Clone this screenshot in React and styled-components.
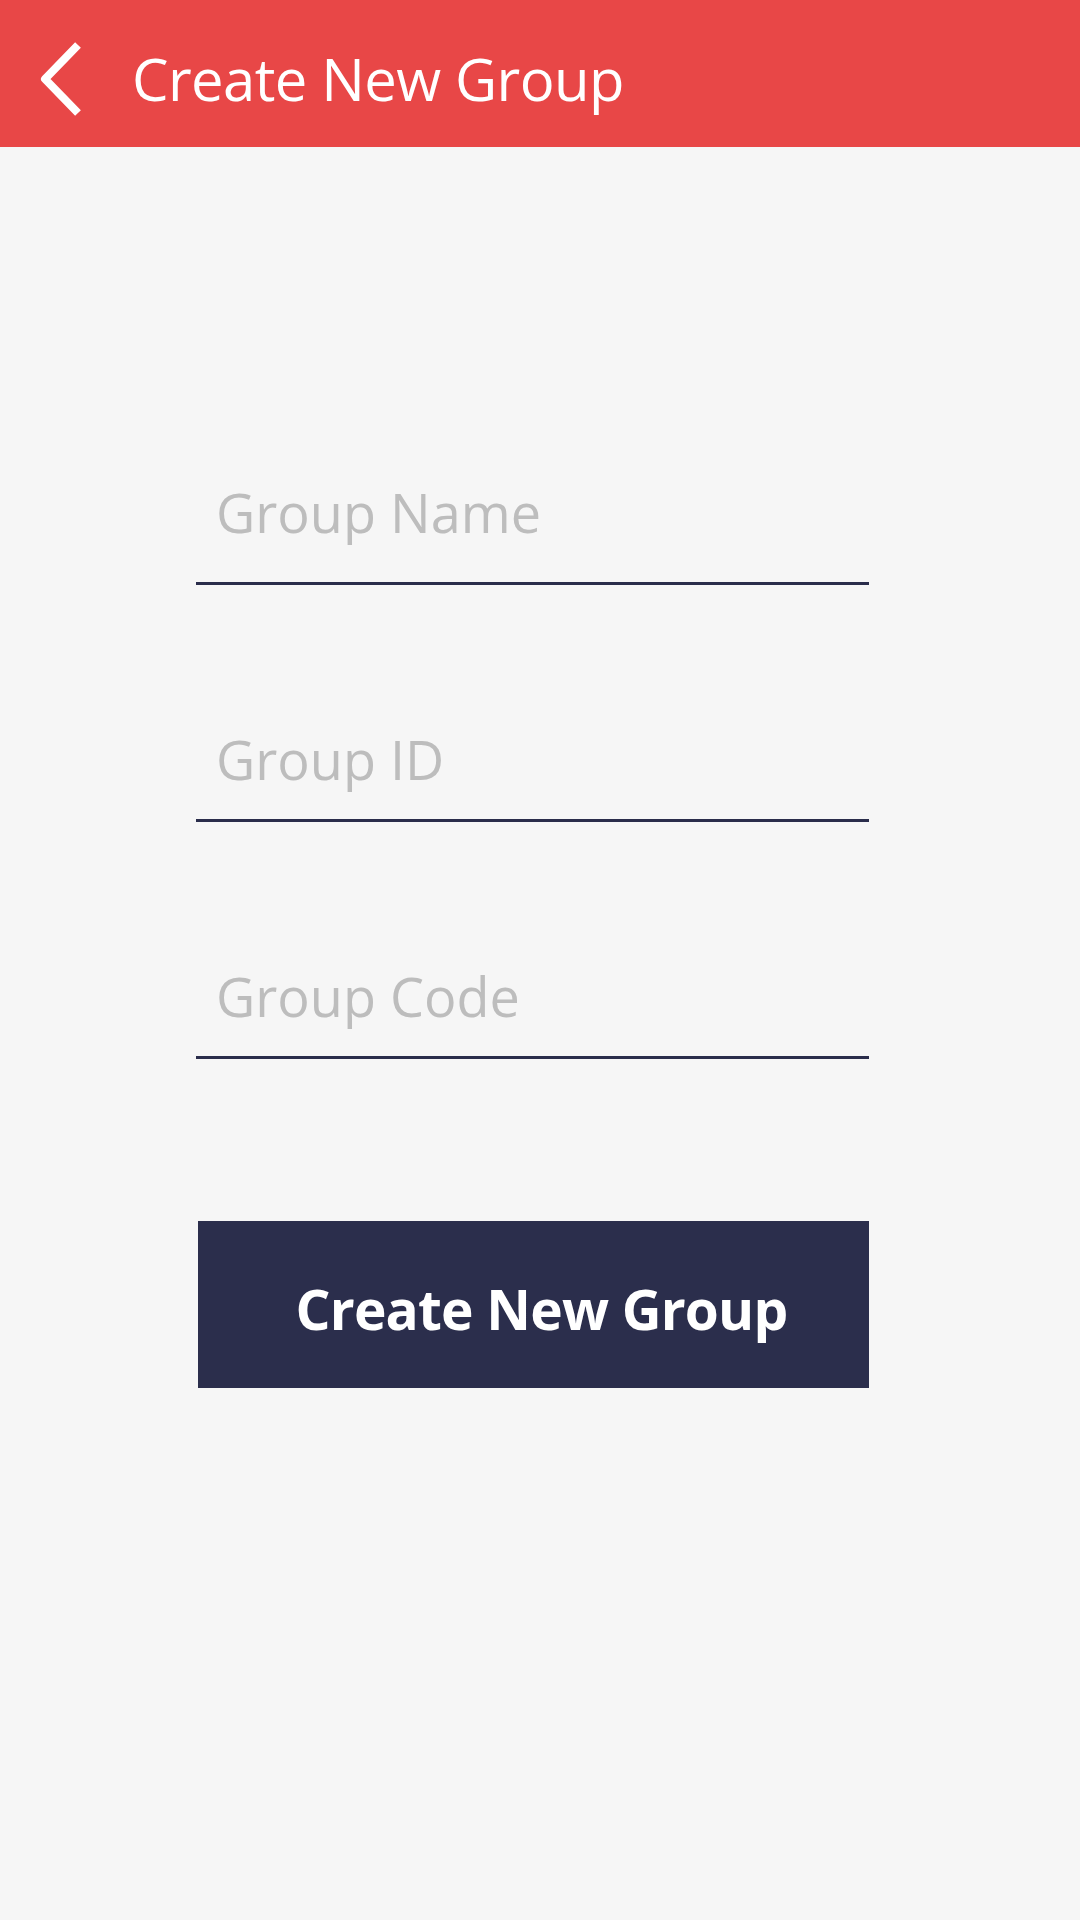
import React from 'react'
import styled, { createGlobalStyle } from 'styled-components'

const GlobalStyle = createGlobalStyle`
    html, body {
        margin: 0;
        padding: 0;
        background: #f6f6f6;
    }

    body {
        font-family: "Open Sans", "Noto Sans", sans-serif;
    }

    * {
        box-sizing: border-box;
    }
`

const Page = styled.div`
    width: 1080px;
    min-height: 1920px;
    background: #f6f6f6;
`

const Header = styled.header`
    height: 147px;
    background: #e84747;
    display: flex;
    align-items: center;
    padding-left: 36px;
`

const BackButton = styled.button`
    width: 50px;
    height: 80px;
    border: none;
    background: none;
    padding: 10px 0 0;
    display: flex;
    align-items: center;
    justify-content: center;
    cursor: pointer;

    svg {
        display: block;
    }
`

const Title = styled.h1`
    margin: 0 0 0 46px;
    color: #ffffff;
    font-size: 58px;
    font-weight: 400;
    letter-spacing: -0.6px;
    line-height: 1;
    padding-top: 10px;
`

const Form = styled.form`
    width: 673px;
    margin-left: 196px;
    padding-top: 338px;
    display: flex;
    flex-direction: column;
`

const Field = styled.div`
    height: 100px;
    margin-top: ${p => p.$first ? '0' : '137px'};
    border-bottom: 3px solid #2a2d4b;
    display: flex;
    align-items: flex-end;
    padding-bottom: ${p => p.$first ? '37px' : '27px'};
`

const Input = styled.input`
    width: 100%;
    border: none;
    outline: none;
    background: transparent;
    padding: 0 0 0 20px;
    font-family: "Open Sans", "Noto Sans", sans-serif;
    font-size: 54px;
    line-height: 1.2;
    color: #333;

    &::placeholder {
        color: #bdbdbd;
        opacity: 1;
    }
`

const SubmitButton = styled.button`
    margin-top: 162px;
    margin-left: 2px;
    width: 671px;
    height: 167px;
    border: none;
    background: #2b2e4c;
    color: #ffffff;
    font-family: "Open Sans", "Noto Sans", sans-serif;
    font-size: 55px;
    font-weight: 700;
    letter-spacing: -0.8px;
    padding: 8px 0 0 16px;
    cursor: pointer;
`

const App = () => {
    return (
        <Page>
            <GlobalStyle />
            <Header>
                <BackButton type="button" aria-label="Back">
                    <svg width="46" height="76" viewBox="0 0 46 76">
                        <polyline
                            points="40,4 7,38 40,72"
                            fill="none"
                            stroke="#ffffff"
                            strokeWidth="8"
                            strokeLinecap="butt"
                            strokeLinejoin="round"
                        />
                    </svg>
                </BackButton>
                <Title>Create New Group</Title>
            </Header>
            <Form onSubmit={e => e.preventDefault()}>
                <Field $first>
                    <Input placeholder="Group Name" />
                </Field>
                <Field>
                    <Input placeholder="Group ID" />
                </Field>
                <Field>
                    <Input placeholder="Group Code" />
                </Field>
                <SubmitButton type="submit">Create New Group</SubmitButton>
            </Form>
        </Page>
    )
}

export default App
